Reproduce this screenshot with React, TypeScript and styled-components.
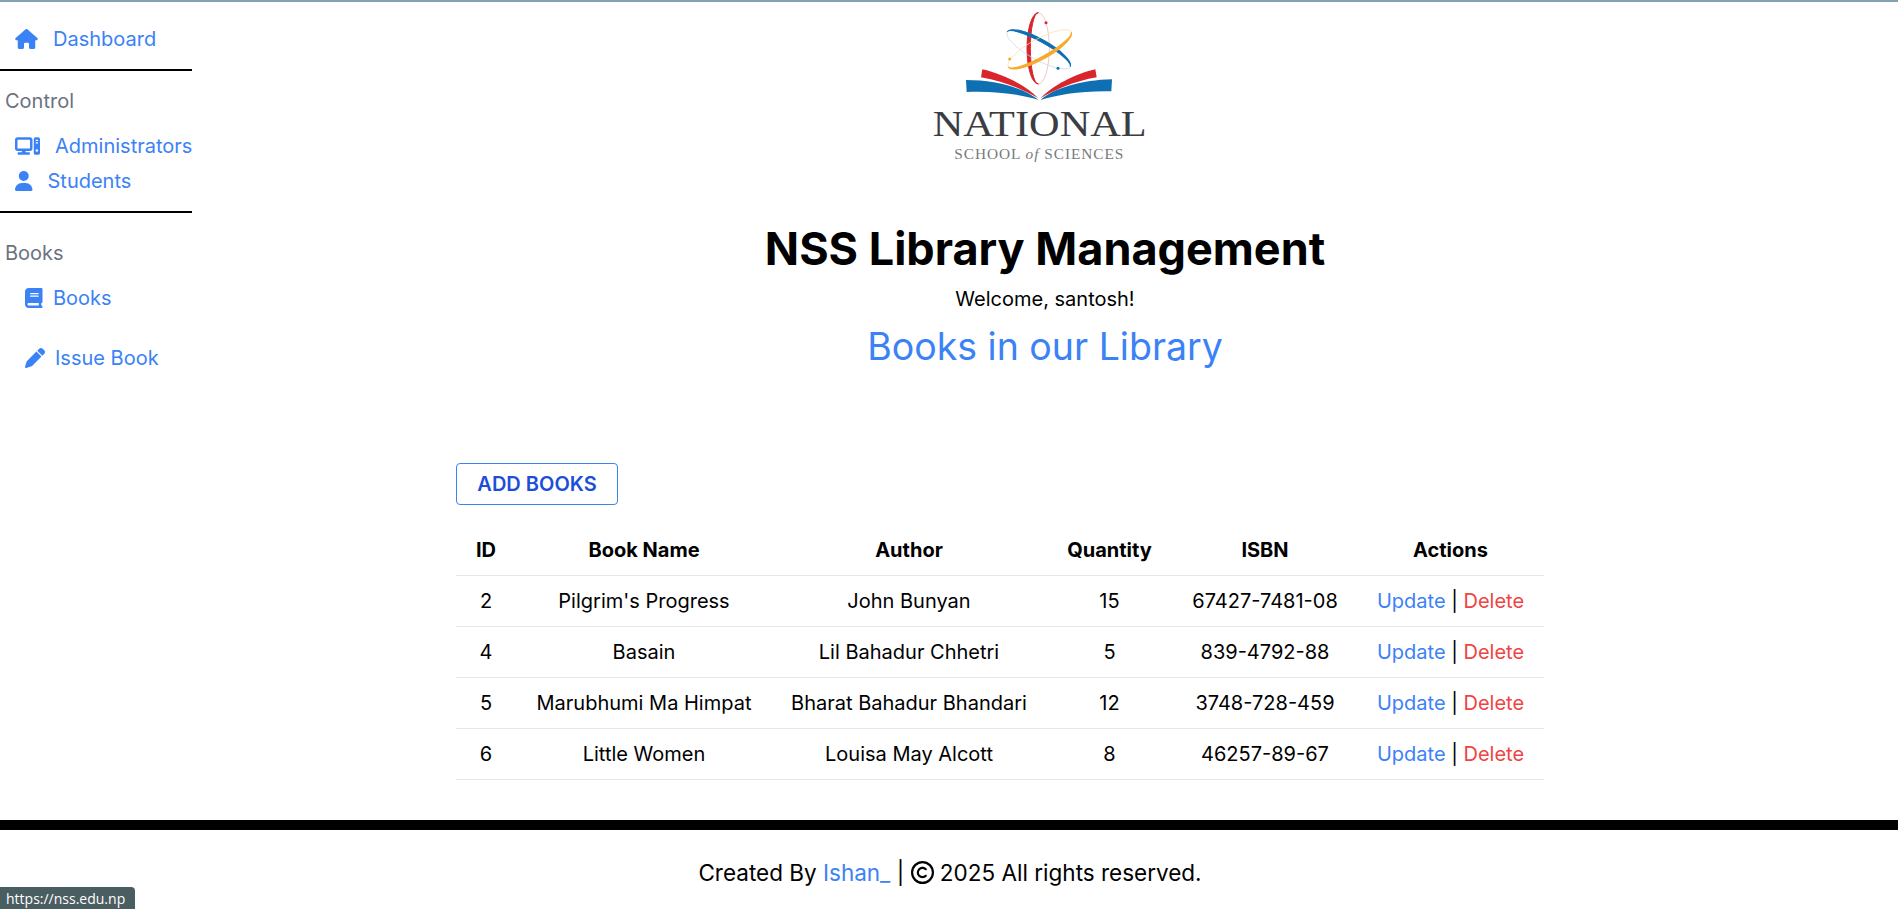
import React from "react";
import styled, { createGlobalStyle } from "styled-components";
import { FaHouse, FaUser, FaBook, FaPen, FaComputer, FaRegCopyright } from "react-icons/fa6";

const Global = createGlobalStyle`
  html, body { margin: 0; padding: 0; background: #fff; }
  body { font-family: Inter, "Liberation Sans", sans-serif; color: #000; overflow: hidden; }
  * { box-sizing: border-box; }
`;

const Page = styled.div`
  width: 1898px;
  height: 909px;
  display: flex;
  flex-direction: column;
  border-top: 2px solid #7fa4b0;
`;
const Upper = styled.div`
  display: flex;
  align-items: flex-start;
`;
const Sidebar = styled.aside`
  width: 192px;
  flex: none;
  padding-top: 23px;
  font-size: 20px;
  line-height: 28px;
`;
const NavItem = styled.a<{ $indent: number; $gap: number; $icon: number; $top?: number }>`
  display: flex;
  align-items: center;
  white-space: nowrap;
  color: #3b82f6;
  padding-left: ${(p) => p.$indent}px;
  gap: ${(p) => p.$gap}px;
  margin-top: ${(p) => p.$top ?? 0}px;
  svg { width: ${(p) => p.$icon}px; height: 20px; flex: none; }
`;
const Rule = styled.hr<{ $top: number }>`
  margin: ${(p) => p.$top}px 0 0;
  border: 0;
  height: 2px;
  background: #000;
`;
const SectionLabel = styled.div<{ $top: number }>`
  margin-top: ${(p) => p.$top}px;
  padding-left: 5px;
  color: #6b7280;
`;
const Main = styled.main`
  flex: 1;
  display: flex;
  flex-direction: column;
  align-items: center;
`;
const Logo = styled.svg`
  display: block;
  width: 290px;
  height: 178px;
`;
const Title = styled.h1`
  margin: 45px 0 0;
  font-size: 45px;
  line-height: 48px;
  font-weight: 700;
`;
const Welcome = styled.p`
  margin: 12px 0 0;
  font-size: 20px;
  line-height: 28px;
`;
const SubTitle = styled.h2`
  margin: 14px 0 0;
  font-size: 37.5px;
  line-height: 40px;
  font-weight: 400;
  color: #3b82f6;
`;
const TableArea = styled.section`
  width: 1088px;
  margin: 96px 90px 0 0;
`;
const AddButton = styled.button`
  display: block;
  width: 162px;
  height: 42px;
  padding: 0;
  background: #fff;
  border: 1px solid #3b82f6;
  border-radius: 4px;
  color: #1d4ed8;
  font: 600 20px/28px Inter, sans-serif;
`;
const BookTable = styled.table`
  width: 1088px;
  margin-top: 19px;
  border-collapse: collapse;
  table-layout: fixed;
  font-size: 20px;
  line-height: 28px;
`;
const HeadCell = styled.th<{ $w: number }>`
  width: ${(p) => p.$w}px;
  height: 51px;
  padding: 1px 0 0;
  font-weight: 700;
  text-align: center;
  border-bottom: 1px solid #e5e7eb;
`;
const Cell = styled.td`
  height: 51px;
  padding: 0;
  text-align: center;
  white-space: nowrap;
  border-bottom: 1px solid #e5e7eb;
`;
const UpdateLink = styled.a`
  color: #3b82f6;
`;
const DeleteLink = styled.a`
  color: #ef4444;
`;
const Footer = styled.footer`
  margin-top: 40px;
  border-top: 10px solid #000;
  padding: 29px 0 0 2px;
  text-align: center;
  font-size: 22.5px;
  line-height: 28px;
  svg { width: 23px; height: 23px; vertical-align: -3px; }
`;
const FooterLink = styled.a`
  color: #3b82f6;
`;
const StatusBubble = styled.div`
  position: fixed;
  left: 0;
  bottom: 0;
  width: 135px;
  height: 22px;
  padding-left: 6px;
  background: #4a5d61;
  border-top-right-radius: 4px;
  color: #fff;
  font: 14px/23px "Open Sans", "Noto Sans", sans-serif;
`;

const books = [
  [2, "Pilgrim's Progress", "John Bunyan", 15, "67427-7481-08"],
  [4, "Basain", "Lil Bahadur Chhetri", 5, "839-4792-88"],
  [5, "Marubhumi Ma Himpat", "Bharat Bahadur Bhandari", 12, "3748-728-459"],
  [6, "Little Women", "Louisa May Alcott", 8, "46257-89-67"],
];

const columns: [string, number][] = [
  ["ID", 60],
  ["Book Name", 256],
  ["Author", 274],
  ["Quantity", 127],
  ["ISBN", 184],
  ["Actions", 187],
];

function LogoMark() {
  return (
    <Logo viewBox="0 6 870 534" role="img" aria-label="National School of Sciences">
      <ellipse cx="415" cy="145" rx="33" ry="107" fill="none" stroke="#e9a9a4" strokeWidth="2" />
      <g transform="translate(415 145)">
        <path d="M0 -107A34 107 0 0 0 0 107A24 107 0 0 1 0 -107Z" fill="#d8262c" stroke="#d8262c" strokeWidth="3" />
      </g>
      <circle cx="438" cy="68" r="4.5" fill="#d8262c" />
      <g transform="translate(416 148) rotate(29)">
        <ellipse rx="108" ry="31" fill="none" stroke="#c8d9ea" strokeWidth="2" />
        <path d="M-108 0A108 31 0 0 1 108 0A108 23 0 0 0 -108 0Z" fill="#0e6fb2" stroke="#0e6fb2" strokeWidth="3" />
      </g>
      <circle cx="474" cy="205" r="4.5" fill="#0e6fb2" />
      <g transform="translate(419 148) rotate(-29)">
        <ellipse rx="108" ry="31" fill="none" stroke="#f8deb0" strokeWidth="2" />
        <path d="M-108 0A108 31 0 0 0 108 0A108 23 0 0 1 -108 0Z" fill="#f6a92c" stroke="#f6a92c" strokeWidth="3" />
      </g>
      <circle cx="329" cy="177" r="4.5" fill="#f6a92c" />
      <path d="M247 208C310 222 380 258 415 295C375 270 310 243 243 232Z" fill="#d8262c" />
      <path d="M198 240C290 240 375 265 416 300C370 285 290 272 200 276Z" fill="#0e6fb2" />
      <path d="M586 208C525 222 455 258 422 295C462 270 525 243 590 232Z" fill="#d8262c" />
      <path d="M636 238C545 240 460 265 422 300C468 285 545 272 634 274Z" fill="#0e6fb2" />
      <text x="98" y="407" textLength="642" lengthAdjust="spacingAndGlyphs" fontFamily="'Liberation Serif', serif" fontSize="110" fill="#3a3d42">NATIONAL</text>
      <text x="163" y="478" textLength="507" lengthAdjust="spacing" fontFamily="'Liberation Serif', serif" fontSize="46" fill="#77797c">SCHOOL <tspan fontStyle="italic">of</tspan> SCIENCES</text>
    </Logo>
  );
}

export default function App() {
  return (
    <Page>
      <Global />
      <Upper>
        <Sidebar>
          <NavItem $indent={15} $gap={15} $icon={23}><FaHouse />Dashboard</NavItem>
          <Rule $top={16} />
          <SectionLabel $top={16}>Control</SectionLabel>
          <NavItem $indent={15} $gap={15} $icon={25} $top={17}><FaComputer />Administrators</NavItem>
          <NavItem $indent={15} $gap={15} $icon={17.5} $top={7}><FaUser />Students</NavItem>
          <Rule $top={16} />
          <SectionLabel $top={26}>Books</SectionLabel>
          <NavItem $indent={25} $gap={10.5} $icon={17.5} $top={17}><FaBook />Books</NavItem>
          <NavItem $indent={25} $gap={10} $icon={20} $top={32}><FaPen />Issue Book</NavItem>
        </Sidebar>
        <Main>
          <LogoMark />
          <Title>NSS Library Management</Title>
          <Welcome>Welcome, santosh!</Welcome>
          <SubTitle>Books in our Library</SubTitle>
          <TableArea>
            <AddButton>ADD BOOKS</AddButton>
            <BookTable>
              <thead>
                <tr>
                  {columns.map(([name, w]) => (
                    <HeadCell key={name} $w={w}>{name}</HeadCell>
                  ))}
                </tr>
              </thead>
              <tbody>
                {books.map((b) => (
                  <tr key={b[0]}>
                    {b.map((v, i) => (
                      <Cell key={i}>{v}</Cell>
                    ))}
                    <Cell>
                      <UpdateLink>Update</UpdateLink> | <DeleteLink>Delete</DeleteLink>
                    </Cell>
                  </tr>
                ))}
              </tbody>
            </BookTable>
          </TableArea>
        </Main>
      </Upper>
      <Footer>
        Created By <FooterLink>Ishan_</FooterLink> | <FaRegCopyright /> 2025 All rights reserved.
      </Footer>
      <StatusBubble>https://nss.edu.np</StatusBubble>
    </Page>
  );
}
